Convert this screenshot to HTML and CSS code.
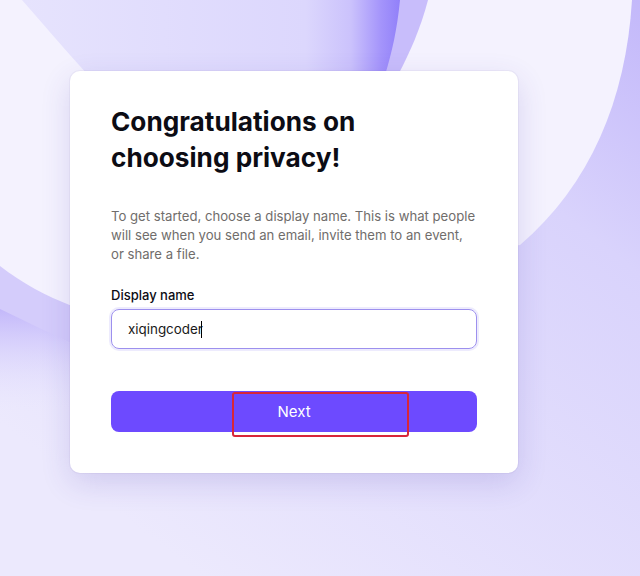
FILE: index.html
```html
<!DOCTYPE html>
<html lang="en">
<head>
<meta charset="utf-8">
<title>Congratulations on choosing privacy!</title>
<link rel="stylesheet" href="styles.css">
</head>
<body>
<svg class="backdrop" width="640" height="576" viewBox="0 0 640 576" aria-hidden="true">
  <defs>
    <linearGradient id="base" x1="640" y1="0" x2="200" y2="576" gradientUnits="userSpaceOnUse">
      <stop offset="0" stop-color="#c3b8fa"/>
      <stop offset="0.3" stop-color="#d9d3fc"/>
      <stop offset="1" stop-color="#ece9fd"/>
    </linearGradient>
    <linearGradient id="shade" x1="0" y1="305" x2="0" y2="410" gradientUnits="userSpaceOnUse">
      <stop offset="0" stop-color="#c0b4fa"/>
      <stop offset="1" stop-color="#e6e3fd" stop-opacity="0"/>
    </linearGradient>
    <linearGradient id="orb" x1="22" y1="0" x2="400" y2="0" gradientUnits="userSpaceOnUse">
      <stop offset="0" stop-color="#e6e3fd"/>
      <stop offset="0.75" stop-color="#dcd7fd"/>
      <stop offset="0.87" stop-color="#cbc2fc"/>
      <stop offset="0.95" stop-color="#a494fb"/>
      <stop offset="1" stop-color="#9180f9"/>
    </linearGradient>
  </defs>
  <rect width="640" height="576" fill="url(#base)"/>
  <path d="M0 300 C25 318 50 332 72 344 L72 440 L0 410 Z" fill="url(#shade)"/>
  <path d="M0 240 L72 280 L72 344 C50 333 25 321 0 309 Z" fill="#d4ccfb"/>
  <path d="M632 0 C626 100 590 185 520 245 L72 306 C46 296 22 283 0 266 L0 0 Z" fill="#f4f2fe"/>
  <path d="M60 0 L428 0 C420 30 410 52 398 75 L120 75 Z" fill="#c8bdfb"/>
  <path d="M22 0 L400 0 C397 30 392 52 385 75 L88 75 C65 50 44 25 22 0 Z" fill="url(#orb)"/>
</svg>

<main class="page">
  <section class="card">
    <h1 class="title">Congratulations on<br>choosing privacy!</h1>
    <p class="lead">To get started, choose a display name. This is what people will see when you send an email, invite them to an event, or share a file.</p>
    <label class="label" for="display-name">Display name</label>
    <div class="field" id="display-name" role="textbox">xiqingcoder<span class="caret"></span></div>
    <div class="action">
      <button class="btn" type="button">Next</button>
      <span class="mark" aria-hidden="true"></span>
    </div>
  </section>
</main>
</body>
</html>
```

FILE: styles.css
```css
* { box-sizing: border-box; }

html, body {
  margin: 0;
  padding: 0;
  width: 640px;
  height: 576px;
  overflow: hidden;
}

body {
  position: relative;
  font-family: Inter, "Noto Sans", "Liberation Sans", sans-serif;
  background: #e6e3fd;
}

.backdrop {
  position: absolute;
  left: 0;
  top: 0;
  z-index: 0;
}

.page {
  position: relative;
  z-index: 1;
  display: flex;
  padding: 71px 0 0 70px;
}

.card {
  width: 448px;
  height: 402px;
  background: #ffffff;
  border-radius: 10px;
  box-shadow: 0 0 0 1px rgba(40, 30, 90, 0.04), 0 10px 30px rgba(70, 50, 170, 0.16);
  padding: 33px 41px 41px;
  display: flex;
  flex-direction: column;
}

.title {
  margin: 0;
  font-size: 26.2px;
  line-height: 36px;
  font-weight: 700;
  color: #0c0c14;
}

.lead {
  margin: 31px 0 0;
  font-size: 13.15px;
  line-height: 19px;
  color: #706d6b;
}

.label {
  margin-top: 22px;
  font-size: 13px;
  line-height: 19px;
  font-weight: 500;
  color: #0c0c14;
}

.field {
  margin-top: 4px;
  height: 41px;
  border: 1px solid #9d90ee;
  border-radius: 8px;
  box-shadow: 0 0 0 2px rgba(143, 128, 240, 0.16);
  display: flex;
  align-items: center;
  padding-left: 16px;
  font-size: 13.4px;
  color: #1a1a1a;
}

.caret {
  display: inline-block;
  width: 1px;
  height: 17px;
  background: #000;
  margin-left: -2px;
}

.action {
  position: relative;
  margin-top: 42px;
}

.btn {
  display: block;
  width: 100%;
  height: 41px;
  border: 0;
  border-radius: 8px;
  background: #6d4aff;
  color: #ffffff;
  font-family: inherit;
  font-size: 15px;
  font-weight: 400;
}

.mark {
  position: absolute;
  left: 121px;
  top: 1px;
  width: 177px;
  height: 45px;
  border: 2.5px solid #d8263a;
  border-radius: 3px;
}
```
